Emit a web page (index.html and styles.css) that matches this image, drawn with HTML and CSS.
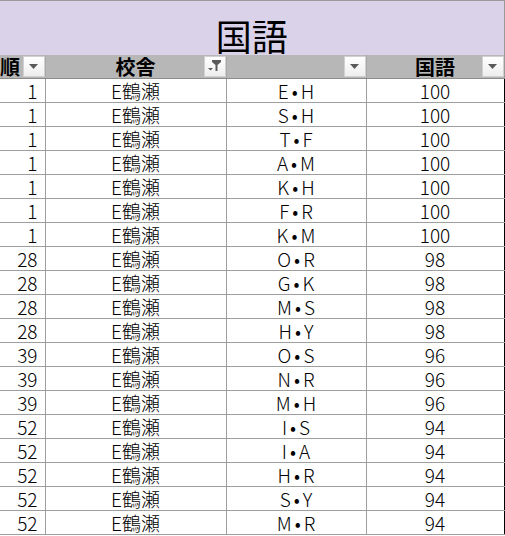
FILE: index.html
```html
<!DOCTYPE html>
<html lang="ja">
<head>
<meta charset="utf-8">
<link rel="stylesheet" href="styles.css">
</head>
<body>
<table class="sheet">
  <colgroup>
    <col class="c1"><col class="c2"><col class="c3"><col class="c4">
  </colgroup>
  <thead>
    <tr class="title-row"><th colspan="4" class="title">国語</th></tr>
    <tr class="head-row">
      <th class="h h-left"><span class="hl">順</span><span class="dd"><svg width="9" height="5" viewBox="0 0 9 5"><path d="M0 0H9L4.5 5Z" fill="#5a5a5a"/></svg></span></th>
      <th class="h"><span>校舎</span><span class="dd"><svg width="14" height="12" viewBox="0 0 14 12"><path d="M4 0H13V2L9.5 5V11H7.5V5L4 2Z" fill="#5a5a5a"/><path d="M0 8H5L2.5 10.5Z" fill="#5a5a5a"/></svg></span></th>
      <th class="h"><span></span><span class="dd"><svg width="9" height="5" viewBox="0 0 9 5"><path d="M0 0H9L4.5 5Z" fill="#5a5a5a"/></svg></span></th>
      <th class="h h-last"><span>国語</span><span class="dd"><svg width="9" height="5" viewBox="0 0 9 5"><path d="M0 0H9L4.5 5Z" fill="#5a5a5a"/></svg></span></th>
    </tr>
  </thead>
  <tbody>
    <tr><td class="n">1</td><td>E鶴瀬</td><td class="nm">E•H</td><td class="last">100</td></tr>
    <tr><td class="n">1</td><td>E鶴瀬</td><td class="nm">S•H</td><td class="last">100</td></tr>
    <tr><td class="n">1</td><td>E鶴瀬</td><td class="nm">T•F</td><td class="last">100</td></tr>
    <tr><td class="n">1</td><td>E鶴瀬</td><td class="nm">A•M</td><td class="last">100</td></tr>
    <tr><td class="n">1</td><td>E鶴瀬</td><td class="nm">K•H</td><td class="last">100</td></tr>
    <tr><td class="n">1</td><td>E鶴瀬</td><td class="nm">F•R</td><td class="last">100</td></tr>
    <tr><td class="n">1</td><td>E鶴瀬</td><td class="nm">K•M</td><td class="last">100</td></tr>
    <tr><td class="n">28</td><td>E鶴瀬</td><td class="nm">O•R</td><td class="last">98</td></tr>
    <tr><td class="n">28</td><td>E鶴瀬</td><td class="nm">G•K</td><td class="last">98</td></tr>
    <tr><td class="n">28</td><td>E鶴瀬</td><td class="nm">M•S</td><td class="last">98</td></tr>
    <tr><td class="n">28</td><td>E鶴瀬</td><td class="nm">H•Y</td><td class="last">98</td></tr>
    <tr><td class="n">39</td><td>E鶴瀬</td><td class="nm">O•S</td><td class="last">96</td></tr>
    <tr><td class="n">39</td><td>E鶴瀬</td><td class="nm">N•R</td><td class="last">96</td></tr>
    <tr><td class="n">39</td><td>E鶴瀬</td><td class="nm">M•H</td><td class="last">96</td></tr>
    <tr><td class="n">52</td><td>E鶴瀬</td><td class="nm">I•S</td><td class="last">94</td></tr>
    <tr><td class="n">52</td><td>E鶴瀬</td><td class="nm">I•A</td><td class="last">94</td></tr>
    <tr><td class="n">52</td><td>E鶴瀬</td><td class="nm">H•R</td><td class="last">94</td></tr>
    <tr><td class="n">52</td><td>E鶴瀬</td><td class="nm">S•Y</td><td class="last">94</td></tr>
    <tr><td class="n">52</td><td>E鶴瀬</td><td class="nm">M•R</td><td class="last">94</td></tr>
  </tbody>
</table>
</body>
</html>
```
FILE: styles.css
```css
html, body {
  margin: 0;
  padding: 0;
  background: #ffffff;
  overflow: hidden;
}
.sheet {
  border-collapse: collapse;
  table-layout: fixed;
  width: 504px;
  font-family: "Noto Sans CJK JP", "Noto Sans", sans-serif;
  color: #000;
}
.c1 { width: 45px; }
.c2 { width: 181px; }
.c3 { width: 140px; }
.c4 { width: 138px; }
.title-row { height: 54px; }
.title {
  background: #d9d2e9;
  border-top: 1px solid #9a9a9a;
  border-right: 1px solid #9a9a9a;
  font-size: 36px;
  font-weight: 400;
  line-height: 40px;
  padding: 0;
  vertical-align: bottom;
  text-align: center;
}
.head-row { height: 24px; }
.h {
  position: relative;
  background: #b7b7b7;
  border-bottom: 1px solid #8c8c8c;
  border-right: 1px solid #a9a9a9;
  font-size: 20px;
  font-weight: 700;
  line-height: 23px;
  padding: 0;
  text-align: center;
  white-space: nowrap;
}
.h-left { text-align: left; }
.h-last { border-right: 1px solid #9a9a9a; }
.dd {
  position: absolute;
  right: 0;
  top: 1px;
  width: 22px;
  height: 21px;
  box-sizing: border-box;
  border: 1px solid #d0d0d0;
  background: linear-gradient(#ffffff, #eeeeee);
  display: flex;
  align-items: center;
  justify-content: center;
}
td {
  height: 23px;
  padding: 0;
  font-size: 19px;
  font-weight: 300;
  line-height: 23px;
  text-align: center;
  border-right: 1px solid #9e9e9e;
  border-bottom: 1px solid #9e9e9e;
  white-space: nowrap;
  overflow: hidden;
}
td.n {
  text-align: right;
  padding-right: 7px;
}
td.nm {
  letter-spacing: 3px;
  padding-left: 3px;
}
td.last {
  border-right: 1px solid #000;
}
```
